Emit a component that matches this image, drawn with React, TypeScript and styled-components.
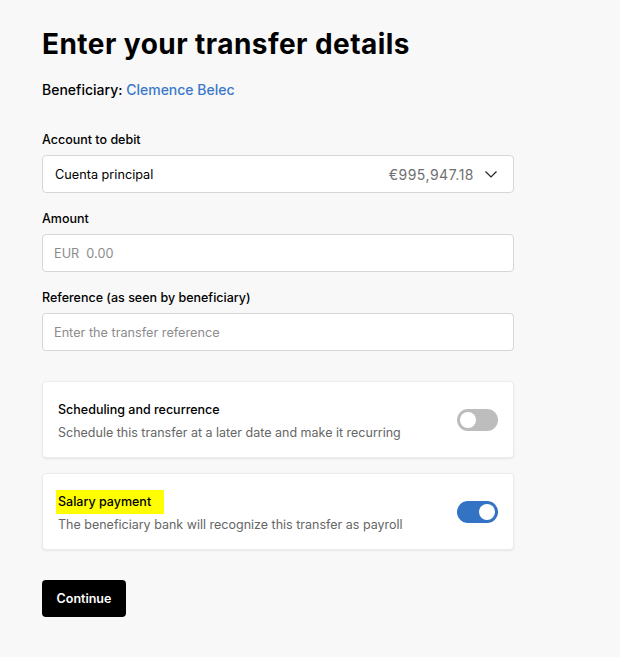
import styled, { createGlobalStyle } from "styled-components";

const GlobalStyle = createGlobalStyle`
  html, body {
    margin: 0;
    padding: 0;
    background: #f8f8f8;
    font-family: Inter, "Liberation Sans", Arial, sans-serif;
    color: #000;
  }
`;

const App = () => {
  return (
    <Page>
      <GlobalStyle />
      <Title>Enter your transfer details</Title>
      <Beneficiary>
        Beneficiary: <BeneficiaryName>Clemence Belec</BeneficiaryName>
      </Beneficiary>

      <Form>
        <Field>
          <Label>Account to debit</Label>
          <Select>
            <span>Cuenta principal</span>
            <SelectRight>
              <Balance>€995,947.18</Balance>
              <svg width="14" height="14" viewBox="0 0 14 14" fill="none">
                <path d="M1.5 4.5 L7 10 L12.5 4.5" stroke="#222" strokeWidth="1.2" />
              </svg>
            </SelectRight>
          </Select>
        </Field>

        <Field>
          <Label>Amount</Label>
          <Input>
            <Placeholder>EUR&nbsp;&nbsp;0.00</Placeholder>
          </Input>
        </Field>

        <Field>
          <Label>Reference (as seen by beneficiary)</Label>
          <Input>
            <Placeholder>Enter the transfer reference</Placeholder>
          </Input>
        </Field>
      </Form>

      <Cards>
        <Card>
          <CardText>
            <CardTitle>Scheduling and recurrence</CardTitle>
            <CardDesc>Schedule this transfer at a later date and make it recurring</CardDesc>
          </CardText>
          <Toggle $on={false}>
            <Knob />
          </Toggle>
        </Card>
        <Card>
          <CardText>
            <CardTitle>
              <Highlight>Salary payment</Highlight>
            </CardTitle>
            <CardDesc>The beneficiary bank will recognize this transfer as payroll</CardDesc>
          </CardText>
          <Toggle $on={true}>
            <Knob />
          </Toggle>
        </Card>
      </Cards>

      <Button>Continue</Button>
    </Page>
  );
};

export default App;

const Page = styled.div`
  width: 472px;
  padding: 27px 0 40px 42px;
`;

const Title = styled.h1`
  margin: 0;
  font-size: 28px;
  line-height: 34px;
  font-weight: 700;
  letter-spacing: 0.45px;
`;

const Beneficiary = styled.div`
  margin-top: 19px;
  font-size: 14px;
  line-height: 20px;
  font-weight: 500;
`;

const BeneficiaryName = styled.span`
  color: #3a78c9;
`;

const Form = styled.div`
  margin-top: 30px;
  display: flex;
  flex-direction: column;
  gap: 16px;
`;

const Field = styled.div`
  display: flex;
  flex-direction: column;
  gap: 5px;
`;

const Label = styled.div`
  font-size: 12.5px;
  line-height: 20px;
  font-weight: 500;
`;

const Select = styled.div`
  box-sizing: border-box;
  height: 38px;
  display: flex;
  align-items: center;
  justify-content: space-between;
  padding: 0 15px 0 12px;
  background: #fff;
  border: 1px solid #d6d6d6;
  border-radius: 4px;
  font-size: 12.7px;
`;

const SelectRight = styled.div`
  display: flex;
  align-items: center;
  gap: 10px;
`;

const Balance = styled.span`
  color: #707070;
  font-size: 14px;
  letter-spacing: 0.5px;
`;

const Input = styled.div`
  box-sizing: border-box;
  height: 38px;
  display: flex;
  align-items: center;
  padding: 0 11px;
  background: #fff;
  border: 1px solid #d6d6d6;
  border-radius: 4px;
`;

const Placeholder = styled.span`
  color: #8c8c8c;
  font-size: 12.7px;
`;

const Cards = styled.div`
  margin-top: 30px;
  display: flex;
  flex-direction: column;
  gap: 15px;
`;

const Card = styled.div`
  box-sizing: border-box;
  height: 77px;
  display: flex;
  align-items: center;
  justify-content: space-between;
  padding: 3px 15px 0;
  background: #fff;
  border: 1px solid #ececec;
  border-radius: 4px;
  box-shadow: 0 1px 2px rgba(0, 0, 0, 0.08);
`;

const CardText = styled.div`
  display: flex;
  flex-direction: column;
  gap: 3px;
`;

const CardTitle = styled.div`
  font-size: 12.5px;
  line-height: 20px;
  font-weight: 500;
`;

const Highlight = styled.span`
  background: #ffff00;
  padding: 4px 13px 5px 2px;
  margin-left: -2px;
`;

const CardDesc = styled.div`
  font-size: 12.5px;
  line-height: 20px;
  color: #666;
`;

const Toggle = styled.div<{ $on: boolean }>`
  width: 41px;
  height: 22px;
  margin-top: -3px;
  border-radius: 11px;
  background: ${(p) => (p.$on ? "#3373c4" : "#bdbdbd")};
  display: flex;
  align-items: center;
  justify-content: ${(p) => (p.$on ? "flex-end" : "flex-start")};
  padding: 0 3px;
  box-sizing: border-box;
`;

const Knob = styled.div`
  width: 16px;
  height: 16px;
  border-radius: 50%;
  background: #fff;
`;

const Button = styled.button`
  margin-top: 30px;
  height: 37px;
  width: 84px;
  background: #000;
  color: #fff;
  border: none;
  border-radius: 4px;
  font-family: Inter, "Liberation Sans", Arial, sans-serif;
  font-size: 12.5px;
  font-weight: 600;
  cursor: pointer;
`;
